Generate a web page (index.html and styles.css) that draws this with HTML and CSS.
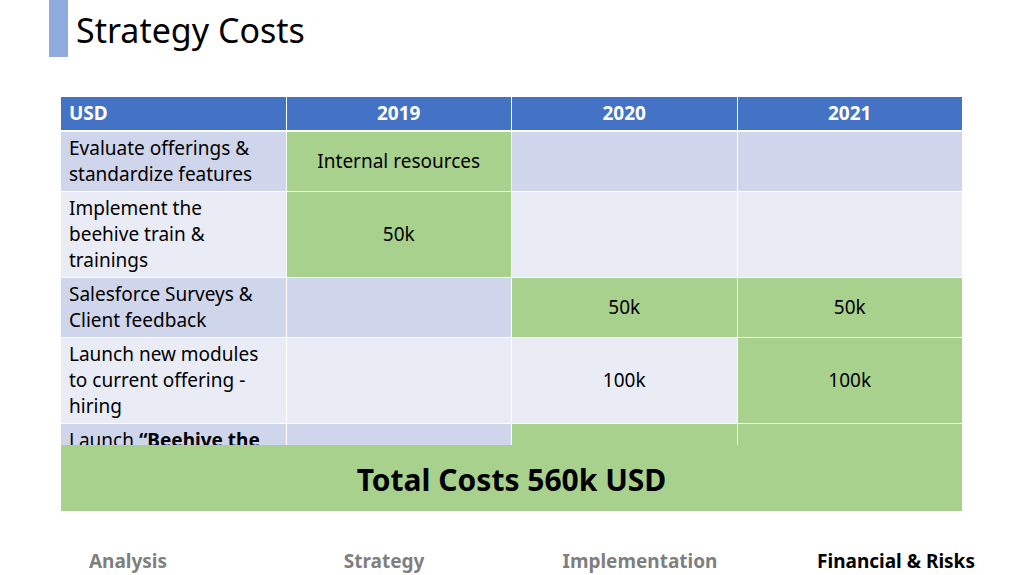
FILE: index.html
```html
<!DOCTYPE html>
<html>
<head>
<meta charset="utf-8">
<link rel="stylesheet" href="styles.css">
</head>
<body>
<div class="slide">
  <header class="title-row">
    <div class="accent"></div>
    <h1 class="title">Strategy Costs</h1>
  </header>
  <section class="content">
    <div class="table-clip">
      <table class="costs">
        <thead>
          <tr class="head">
            <th class="first">USD</th>
            <th>2019</th>
            <th>2020</th>
            <th>2021</th>
          </tr>
        </thead>
        <tbody>
          <tr class="odd r2">
            <td class="first">Evaluate offerings &amp; standardize features</td>
            <td class="green">Internal resources</td>
            <td></td>
            <td></td>
          </tr>
          <tr class="even r3">
            <td class="first">Implement the beehive train &amp; trainings</td>
            <td class="green">50k</td>
            <td></td>
            <td></td>
          </tr>
          <tr class="odd r2">
            <td class="first">Salesforce Surveys &amp; Client feedback</td>
            <td></td>
            <td class="green">50k</td>
            <td class="green">50k</td>
          </tr>
          <tr class="even r3">
            <td class="first">Launch new modules to current offering - hiring</td>
            <td></td>
            <td>100k</td>
            <td class="green">100k</td>
          </tr>
          <tr class="odd r3">
            <td class="first">Launch <b>“Beehive the Platform”</b> for new clients</td>
            <td></td>
            <td class="green">100k</td>
            <td class="green">110k</td>
          </tr>
        </tbody>
      </table>
    </div>
    <div class="total">Total Costs 560k USD</div>
  </section>
  <nav class="nav">
    <span class="nav-item">Analysis</span>
    <span class="nav-item">Strategy</span>
    <span class="nav-item">Implementation</span>
    <span class="nav-item active">Financial &amp; Risks</span>
  </nav>
</div>
</body>
</html>
```
FILE: styles.css
```css
* { box-sizing: border-box; }
html, body {
  margin: 0;
  padding: 0;
  background: #ffffff;
}
body {
  font-family: "Noto Sans", "Open Sans", "Liberation Sans", sans-serif;
  color: #000;
}
.slide {
  width: 1024px;
  height: 575px;
  overflow: hidden;
  display: flex;
  flex-direction: column;
}
.title-row {
  display: flex;
  align-items: flex-start;
  height: 57px;
  padding-left: 49px;
}
.accent {
  width: 19px;
  height: 57px;
  background: #8faadc;
}
.title {
  margin: 0 0 0 8px;
  font-weight: 400;
  font-size: 34px;
  line-height: 1;
  padding-top: 13px;
  letter-spacing: 0;
}
.content {
  margin: 40px 0 0 61px;
  width: 901px;
}
.table-clip {
  height: 348px;
  overflow: hidden;
}
.costs {
  width: 903px;
  margin: 0 -1px;
  border-collapse: separate;
  border-spacing: 1px 0;
  table-layout: fixed;
  font-size: 19px;
  line-height: 26px;
}
.costs th, .costs td {
  padding: 0 8px 2px 8px;
  vertical-align: middle;
  text-align: center;
  border-bottom: 1px solid #fff;
}
.costs td.first, .costs th.first {
  text-align: left;
  padding-right: 14px;
}
.head th {
  background: #4472c4;
  color: #fff;
  font-weight: 700;
  height: 35px;
  border-bottom: 2px solid #fff;
}
.r2 td { height: 60px; }
.r3 td { height: 86px; }
.odd td { background: #cfd5ea; }
.even td { background: #e9ebf5; }
.costs td.green { background: #a9d18e; }
.total {
  height: 66px;
  background: #a9d18e;
  display: flex;
  align-items: center;
  justify-content: center;
  font-size: 30px;
  font-weight: 700;
  padding-top: 2px;
}
.nav {
  display: grid;
  grid-template-columns: repeat(4, 1fr);
  margin-top: 38px;
}
.nav-item {
  text-align: center;
  font-size: 19px;
  font-weight: 700;
  font-stretch: semi-condensed;
  color: #7f7f7f;
  line-height: 24px;
}
.nav-item.active { color: #000; }
```
